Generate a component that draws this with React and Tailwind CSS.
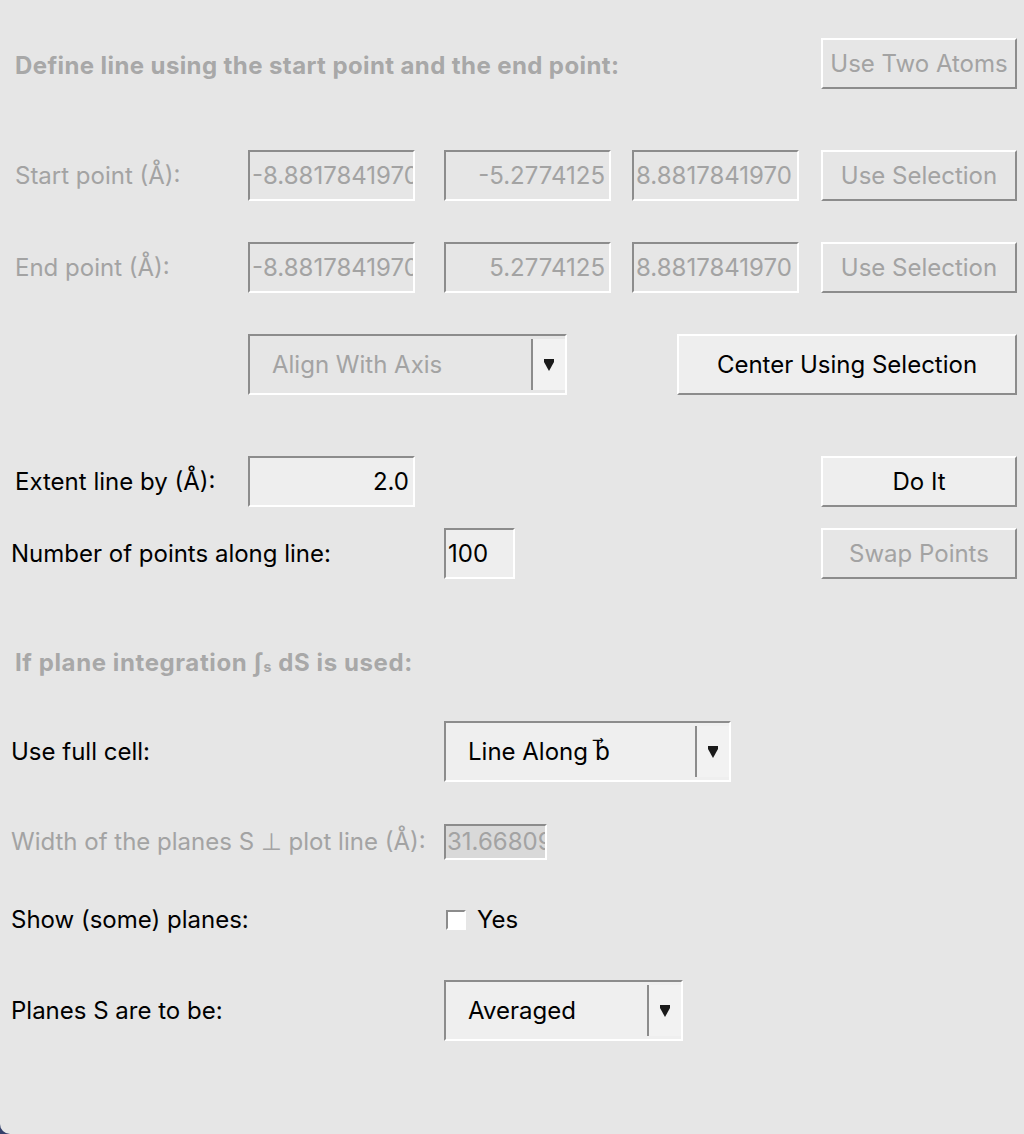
import { useState } from "react";

const font = { fontFamily: "Inter, 'Liberation Sans', sans-serif" };

function Field({ value, className = "", align = "left", tone = "off" }) {
    return (
        <div
            className={`flex h-full items-center overflow-hidden whitespace-nowrap border-2 border-t-[#8c8c8c] border-l-[#8c8c8c] border-b-white border-r-white px-[2px] text-[24px] ${
                align === "right" ? "justify-end" : "justify-start"
            } ${tone === "on" ? "bg-[#eeeeee] text-black" : "bg-[#e6e6e6] text-[#a3a3a3]"} ${className}`}
        >
            <span>{value}</span>
        </div>
    );
}

function Button({ children, className = "", enabled = false }) {
    return (
        <button
            type="button"
            className={`flex h-full items-center justify-center whitespace-nowrap border-2 border-t-white border-l-white border-b-[#8c8c8c] border-r-[#8c8c8c] text-[24px] ${
                enabled ? "bg-[#eeeeee] text-black" : "bg-[#e6e6e6] text-[#a3a3a3]"
            } ${className}`}
        >
            {children}
        </button>
    );
}

function Arrow() {
    return (
        <svg width="12" height="14" viewBox="0 0 12 14">
            <rect x="1" y="1" width="10" height="3" fill="#1a1a1a" />
            <path d="M1 4 L11 4 L6 13 Z" fill="#1a1a1a" />
        </svg>
    );
}

function Combo({ label, className = "", enabled = true, arrowWidth = "w-[34px]" }) {
    return (
        <div
            className={`flex h-full border-2 border-t-[#8c8c8c] border-l-[#8c8c8c] border-b-white border-r-white ${
                enabled ? "bg-[#efefef] text-black" : "bg-[#e6e6e6] text-[#a3a3a3]"
            } ${className}`}
        >
            <div className="flex flex-1 items-center whitespace-nowrap pl-[22px] text-[24px]">{label}</div>
            <div className={`my-[3px] flex ${arrowWidth} items-center justify-center border-l-2 border-[#8c8c8c] bg-[#f2f2f2]`}>
                <Arrow />
            </div>
        </div>
    );
}

export default function App() {
    const [showPlanes, setShowPlanes] = useState(false);

    return (
        <div className="h-[1134px] w-[1024px] bg-[#34406b]" style={font}>
            <div className="relative h-full w-full overflow-hidden rounded-bl-[10px] bg-[#e6e6e6]">
                {/* Define line */}
                <div className="mt-[38px] flex h-[51px] items-center pl-[15px]">
                    <div className="w-[806px] whitespace-nowrap pt-[5px] text-[24px] font-bold tracking-[0.4px] text-[#a8a8a8]">
                        Define line using the start point and the end point:
                    </div>
                    <Button className="w-[196px]">Use Two Atoms</Button>
                </div>

                {/* Start point */}
                <div className="mt-[61px] flex h-[51px] items-center pl-[15px]">
                    <div className="w-[233px] whitespace-nowrap text-[24px] text-[#a3a3a3]">Start point (Å):</div>
                    <Field value="-8.8817841970" className="w-[167px]" />
                    <Field value="-5.2774125" align="right" className="ml-[29px] w-[167px] pr-[4px]" />
                    <Field value="8.8817841970" className="ml-[21px] w-[167px]" />
                    <Button className="ml-[22px] w-[196px]">Use Selection</Button>
                </div>

                {/* End point */}
                <div className="mt-[41px] flex h-[51px] items-center pl-[15px]">
                    <div className="w-[233px] whitespace-nowrap text-[24px] text-[#a3a3a3]">End point (Å):</div>
                    <Field value="-8.8817841970" className="w-[167px]" />
                    <Field value="5.2774125" align="right" className="ml-[29px] w-[167px] pr-[4px]" />
                    <Field value="8.8817841970" className="ml-[21px] w-[167px]" />
                    <Button className="ml-[22px] w-[196px]">Use Selection</Button>
                </div>

                {/* Axis / center */}
                <div className="mt-[41px] flex h-[61px] items-center pl-[248px]">
                    <Combo label="Align With Axis" enabled={false} className="w-[319px]" />
                    <Button enabled className="ml-[110px] w-[340px]">
                        Center Using Selection
                    </Button>
                </div>

                {/* Extent */}
                <div className="mt-[61px] flex h-[51px] items-center pl-[15px]">
                    <div className="w-[233px] whitespace-nowrap text-[24px] text-black">Extent line by (Å):</div>
                    <Field value="2.0" align="right" tone="on" className="w-[167px] pr-[4px]" />
                    <Button enabled className="ml-[406px] w-[196px]">
                        Do It
                    </Button>
                </div>

                {/* Number of points */}
                <div className="mt-[21px] flex h-[51px] items-center pl-[11px]">
                    <div className="w-[433px] whitespace-nowrap text-[24px] text-black">Number of points along line:</div>
                    <Field value="100" tone="on" className="w-[71px]" />
                    <Button className="ml-[306px] w-[196px]">Swap Points</Button>
                </div>

                {/* Plane integration */}
                <div className="mt-[66px] flex h-[36px] items-center whitespace-nowrap pl-[15px] text-[24px] font-bold tracking-[0.6px] text-[#a8a8a8]">
                    If plane integration&nbsp;
                    <span className="font-bold">∫</span>
                    <span className="mt-[8px] text-[14px] leading-none">s</span>
                    &nbsp;dS is used:
                </div>

                {/* Use full cell */}
                <div className="mt-[40px] flex h-[61px] items-center pl-[11px]">
                    <div className="w-[433px] whitespace-nowrap text-[24px] text-black">Use full cell:</div>
                    <Combo
                        label={
                            <span>
                                Line Along <span style={{ fontFamily: "'DejaVu Sans', sans-serif" }}>b⃗</span>
                            </span>
                        }
                        className="w-[287px]"
                    />
                </div>

                {/* Width of planes */}
                <div className="mt-[42px] flex h-[36px] items-center pl-[11px]">
                    <div className="w-[433px] whitespace-nowrap text-[24px] text-[#a3a3a3]">
                        Width of the planes S ⊥ plot line (Å):
                    </div>
                    <div className="flex h-full w-[103px] items-center overflow-hidden whitespace-nowrap border-2 border-t-[#8c8c8c] border-l-[#8c8c8c] border-b-white border-r-white bg-[#d9d9d9] px-[1px] text-[24px] text-[#a3a3a3]">
                        31.66809
                    </div>
                </div>

                {/* Show planes */}
                <div className="mt-[40px] flex h-[40px] items-center pl-[11px]">
                    <div className="w-[435px] whitespace-nowrap text-[24px] text-black">Show (some) planes:</div>
                    <label className="flex cursor-pointer items-center text-[24px] text-black">
                        <span
                            onClick={() => setShowPlanes(!showPlanes)}
                            className="flex h-[20px] w-[20px] items-center justify-center border-2 border-t-[#8c8c8c] border-l-[#8c8c8c] border-b-white border-r-white bg-white text-[14px]"
                        >
                            {showPlanes ? "✓" : ""}
                        </span>
                        <span className="ml-[11px]">Yes</span>
                    </label>
                </div>

                {/* Planes S are to be */}
                <div className="mt-[40px] flex h-[61px] items-center pl-[11px]">
                    <div className="w-[433px] whitespace-nowrap text-[24px] text-black">Planes S are to be:</div>
                    <Combo label="Averaged" className="w-[239px]" />
                </div>
            </div>
        </div>
    );
}
